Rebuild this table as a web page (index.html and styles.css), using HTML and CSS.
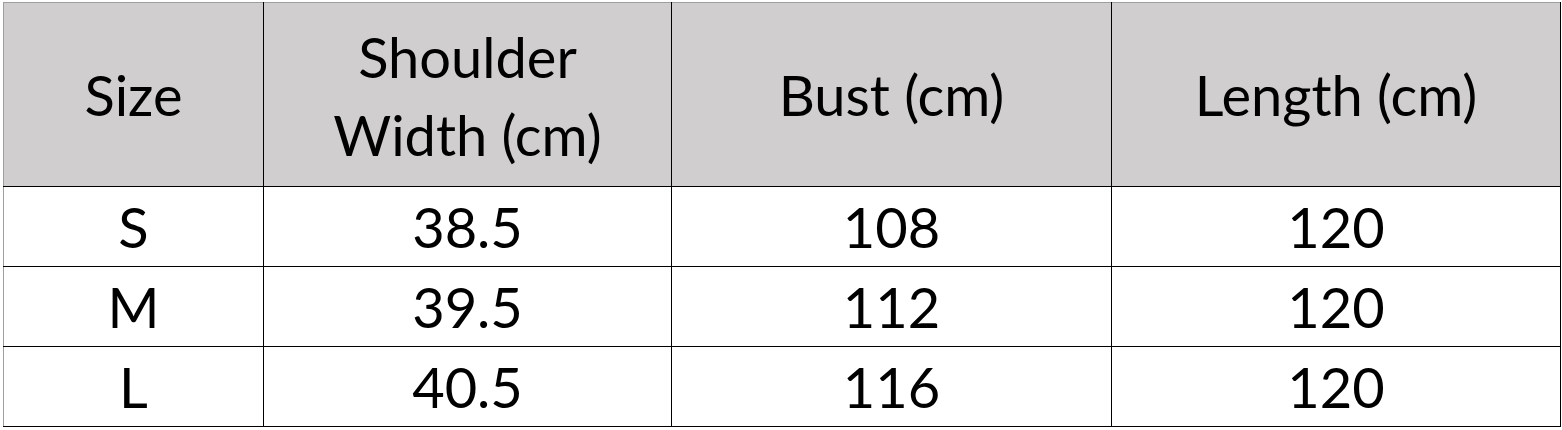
FILE: index.html
```html
<!DOCTYPE html>
<html>
<head>
<meta charset="utf-8">
<link rel="stylesheet" href="styles.css">
</head>
<body>
<table class="size-table">
  <colgroup>
    <col class="c1"><col class="c2"><col class="c3"><col class="c4">
  </colgroup>
  <thead>
    <tr class="head">
      <th>Size</th>
      <th><span class="two">Shoulder<br>Width (cm)</span></th>
      <th>Bust (cm)</th>
      <th>Length (cm)</th>
    </tr>
  </thead>
  <tbody>
    <tr><td>S</td><td>38.5</td><td>108</td><td>120</td></tr>
    <tr><td>M</td><td>39.5</td><td>112</td><td>120</td></tr>
    <tr><td>L</td><td>40.5</td><td>116</td><td>120</td></tr>
  </tbody>
</table>
</body>
</html>
```
FILE: styles.css
```css
html, body {
  margin: 0;
  padding: 0;
  background: #ffffff;
}
body {
  padding: 2px 0 0 3px;
  font-family: Lato, "Liberation Sans", sans-serif;
  color: #000;
}
.size-table {
  border-collapse: collapse;
  table-layout: fixed;
  width: 1557px;
}
.c1 { width: 260px; }
.c2 { width: 408px; }
.c3 { width: 440px; }
.c4 { width: 449px; }
.size-table th,
.size-table td {
  border: 1px solid #000;
  padding: 0;
  text-align: center;
  vertical-align: middle;
  font-size: 56px;
  font-weight: 400;
  line-height: 78px;
}
.size-table th {
  border-top-color: #9e9e9e;
  background: #d0cece;
  height: 183px;
}
.size-table tr > :first-child {
  border-left-color: #9e9e9e;
}
.size-table td {
  height: 79px;
}
.two {
  display: inline-block;
  padding-top: 2px;
}
```
